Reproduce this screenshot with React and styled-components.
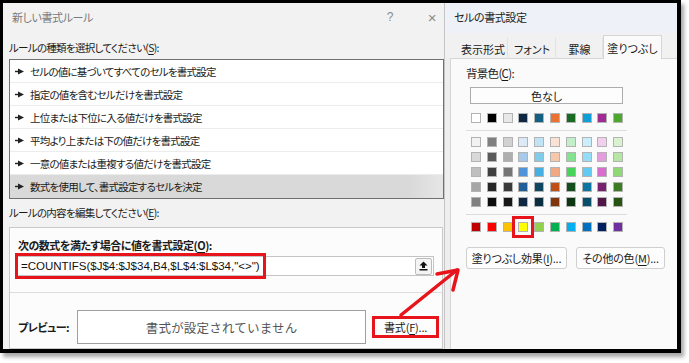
import styled, { createGlobalStyle } from "styled-components";

const GlobalStyle = createGlobalStyle`
  body {
    margin: 0;
    background: #ffffff;
    font-family: "Noto Sans CJK JP", "Noto Sans", sans-serif;
    font-feature-settings: "palt";
    color: #1a1a1a;
  }
`;

const Page = styled.div`
  position: relative;
  width: 689px;
  height: 363px;
`;

const Frame = styled.div`
  box-sizing: border-box;
  width: 681px;
  height: 353px;
  border: 3px solid #000;
  border-right-width: 4px;
  border-bottom-width: 4px;
  box-shadow: 3px 4px 4px rgba(0, 0, 0, 0.35);
  display: flex;
  overflow: hidden;
`;

/* ---------- left: 新しい書式ルール ---------- */

const RuleDialog = styled.section`
  width: 441px;
  flex: none;
  background: #f2f2f2;
  display: flex;
  flex-direction: column;
  padding-left: 6px;
  box-sizing: border-box;
`;

const TitleBar = styled.div`
  height: 30px;
  display: flex;
  align-items: center;
  padding-left: ${({ $indent }) => $indent || 3}px;
  padding-bottom: 2px;
  box-sizing: border-box;
  font-size: 11px;
  letter-spacing: -0.4px;
  color: ${({ $muted }) => ($muted ? "#7a7a7a" : "#222")};
  background: ${({ $bg }) => $bg || "transparent"};
`;

const TitleText = styled.span`
  flex: 1;
`;

const TitleIcon = styled.span`
  width: ${({ $w }) => $w}px;
  text-align: center;
  color: #8a8a8a;
  font-size: ${({ $size }) => $size || 12}px;
  font-family: "Liberation Sans", sans-serif;
`;

const Label = styled.div`
  font-size: ${({ $bold, $size }) => $size || ($bold ? 11 : 10.5)}px;
  letter-spacing: ${({ $bold }) => ($bold ? -0.5 : -0.7)}px;
  line-height: 18px;
  margin-top: ${({ $mt }) => $mt || 0}px;
  margin-left: ${({ $ml }) => $ml || 0}px;
  font-weight: ${({ $bold }) => ($bold ? 700 : 400)};
  white-space: nowrap;
  u {
    text-underline-offset: 2px;
  }
`;

const RuleList = styled.ul`
  list-style: none;
  margin: 2px 0 0;
  padding: 0;
  border: 1px solid #707070;
  background: #fff;
`;

const RuleItem = styled.li`
  height: 23px;
  display: flex;
  align-items: center;
  gap: 6px;
  padding-left: 5px;
  font-size: 10.5px;
  letter-spacing: -0.75px;
  box-sizing: border-box;
  border-bottom: 1px solid ${({ $selected }) => ($selected ? "transparent" : "#ececec")};
  background: ${({ $selected }) =>
    $selected ? "linear-gradient(90deg, #d9d9d9 0%, #d9d9d9 92%, #e6e6e6 100%)" : "#fff"};
`;

const EditBox = styled.div`
  margin-top: 5px;
  margin-right: 1px;
  border: 1px solid #c9c9c9;
  background: #fcfcfc;
  padding-top: 8px;
  flex: 1;
`;

const FormulaField = styled.div`
  margin: 2px 8px 0 5px;
  height: 20px;
  border: 1px solid #c4c4c4;
  background: #fff;
  display: flex;
  align-items: center;
  box-sizing: border-box;
  padding-left: 2px;
`;

const FormulaText = styled.span`
  flex: none;
  display: inline-flex;
  align-items: center;
  height: 20px;
  padding: 0 3px;
  outline: 3px solid #e8141c;
  font-family: "Liberation Sans", Arial, sans-serif;
  font-size: 11.5px;
  color: #111;
  font-feature-settings: normal;
`;

const CollapseButton = styled.span`
  margin-left: auto;
  margin-right: 1px;
  width: 15px;
  height: 15px;
  border: 1px solid #bdbdbd;
  border-radius: 2px;
  background: #f4f4f4;
  display: flex;
  align-items: center;
  justify-content: center;
`;

const Divider = styled.div`
  height: 1px;
  background: #dcdcdc;
  margin-top: ${({ $mt }) => $mt || 0}px;
  width: ${({ $w }) => ($w ? `${$w}px` : "auto")};
`;

const PreviewRow = styled.div`
  margin-top: 17px;
  display: flex;
  align-items: center;
  padding-left: 8px;
`;

const PreviewBox = styled.div`
  margin-left: 8px;
  width: 289px;
  height: 34px;
  box-sizing: border-box;
  border: 1px solid #9f9f9f;
  background: #fff;
  display: flex;
  align-items: center;
  justify-content: center;
  font-size: 12.5px;
  color: #555;
  font-feature-settings: normal;
  letter-spacing: 0.2px;
`;

const DialogButton = styled.button`
  box-sizing: border-box;
  width: ${({ $w }) => $w}px;
  height: 22px;
  margin-left: ${({ $ml }) => $ml || 0}px;
  padding: 0;
  font-family: inherit;
  font-feature-settings: "palt";
  font-size: 11px;
  letter-spacing: -0.2px;
  color: #1a1a1a;
  background: #fdfdfd;
  border: ${({ $hot }) => ($hot ? "3px solid #e8141c" : "1px solid #cfcfcf")};
  border-radius: ${({ $hot }) => ($hot ? 0 : 3)}px;
  u {
    text-underline-offset: 2px;
  }
`;

/* ---------- right: セルの書式設定 ---------- */

const FormatDialog = styled.section`
  flex: 1;
  display: flex;
  flex-direction: column;
  background: #eeeeee;
  border-left: 1px solid #c4c4c4;
`;

const TabStrip = styled.div`
  height: 25px;
  display: flex;
  align-items: flex-end;
  padding-left: 13px;
  background: #f1f1f1;
`;

const Tab = styled.div`
  height: ${({ $active }) => ($active ? 24 : 22)}px;
  width: ${({ $w }) => $w}px;
  display: flex;
  align-items: center;
  justify-content: center;
  font-size: 11px;
  box-sizing: border-box;
  background: ${({ $active }) => ($active ? "#fafafa" : "transparent")};
  border: 1px solid ${({ $active }) => ($active ? "#d6d6d6" : "transparent")};
  border-bottom: none;
  border-right: 1px solid ${({ $active }) => ($active ? "#d6d6d6" : "#e2e2e2")};
  margin-bottom: -1px;
  position: relative;
  z-index: 1;
`;

const TabPanel = styled.div`
  flex: 1;
  margin-left: 5px;
  background: #fafafa;
  border-top: 1px solid #d6d6d6;
  border-left: 1px solid #d6d6d6;
  padding: 5px 0 0 15px;
`;

const NoColorButton = styled.div`
  margin: 5px 0 0 4px;
  width: 153px;
  height: 17px;
  box-sizing: border-box;
  border: 1px solid #adadad;
  background: #fdfdfd;
  font-size: 11px;
  display: flex;
  align-items: center;
  justify-content: center;
`;

const SwatchRow = styled.div`
  display: flex;
  gap: 5.8px;
  margin-left: 5px;
  margin-top: ${({ $mt }) => $mt || 0}px;
`;

const SwatchGrid = styled.div`
  display: flex;
  flex-direction: column;
  gap: 5px;
  margin-top: 6px;
`;

const Swatch = styled.span`
  width: 10px;
  height: 10px;
  box-sizing: border-box;
  border: 1px solid #b3b3b3;
  background: ${({ $c }) => $c};
  outline: ${({ $hot }) => ($hot ? "3px solid #e8141c" : "none")};
  outline-offset: 3px;
`;

const ButtonRow = styled.div`
  display: flex;
  gap: 9px;
  margin-top: 15px;
`;

const Annotation = styled.svg`
  position: absolute;
  left: 0;
  top: 0;
  pointer-events: none;
`;

const rules = [
  "セルの値に基づいてすべてのセルを書式設定",
  "指定の値を含むセルだけを書式設定",
  "上位または下位に入る値だけを書式設定",
  "平均より上または下の値だけを書式設定",
  "一意の値または重複する値だけを書式設定",
  "数式を使用して、書式設定するセルを決定",
];

const themeRow = ["#ffffff", "#000000", "#e8e8e8", "#0e2841", "#156082", "#e97132", "#196b24", "#0f9ed5", "#a02b93", "#4ea72e"];

const tintRows = [
  ["#f2f2f2", "#7f7f7f", "#d1d1d1", "#dceaf7", "#c0e4f5", "#fbe2d5", "#c1f0c8", "#caeefb", "#f2ceef", "#daf2d0"],
  ["#d9d9d9", "#595959", "#aeaeae", "#a6c9ec", "#83cbeb", "#f7c7ac", "#84e291", "#95dcf7", "#e59edd", "#b5e6a2"],
  ["#bfbfbf", "#404040", "#757575", "#4e95d9", "#45b0e1", "#f1a983", "#47d45a", "#61cbf3", "#d86dcd", "#8ed973"],
  ["#a6a6a6", "#262626", "#3a3a3a", "#215f9a", "#0f4761", "#c04f15", "#124f1a", "#0b76a0", "#782170", "#3b7d23"],
  ["#808080", "#0d0d0d", "#171717", "#0e2841", "#0a2f40", "#7f350e", "#0c3511", "#074f6a", "#501549", "#275317"],
];

const standardRow = ["#c00000", "#ff0000", "#ffc000", "#ffff00", "#92d050", "#00b050", "#00b0f0", "#0070c0", "#002060", "#7030a0"];

const Bullet = () => (
  <svg width="9" height="7" viewBox="0 0 9 7">
    <rect x="0" y="2.8" width="4" height="1.4" fill="#222" />
    <polygon points="3,0.5 9,3.5 3,6.5" fill="#222" />
  </svg>
);

const CollapseIcon = () => (
  <svg width="9" height="10" viewBox="0 0 9 10">
    <polygon points="4.5,0.5 8.5,4.5 6,4.5 6,7 3,7 3,4.5 0.5,4.5" fill="#111" />
    <rect x="0.5" y="8" width="8" height="1.5" fill="#111" />
  </svg>
);

export default function App() {
  return (
    <Page>
      <GlobalStyle />
      <Frame>
        <RuleDialog>
          <TitleBar $muted>
            <TitleText>新しい書式ルール</TitleText>
            <TitleIcon $w={20}>?</TitleIcon>
            <TitleIcon $w={20} $size={15} style={{ marginLeft: 22, marginRight: 2 }}>×</TitleIcon>
          </TitleBar>
          <Label $mt={6}>ルールの種類を選択してください(<u>S</u>):</Label>
          <RuleList>
            {rules.map((r, i) => (
              <RuleItem key={r} $selected={i === rules.length - 1}>
                <Bullet />
                {r}
              </RuleItem>
            ))}
          </RuleList>
          <Label $mt={5}>ルールの内容を編集してください(<u>E</u>):</Label>
          <EditBox>
            <Label $bold $ml={8}>次の数式を満たす場合に値を書式設定(<u>O</u>):</Label>
            <FormulaField>
              <FormulaText>=COUNTIFS($J$4:$J$34,B4,$L$4:$L$34,"&lt;&gt;")</FormulaText>
              <CollapseButton>
                <CollapseIcon />
              </CollapseButton>
            </FormulaField>
            <Divider $mt={16} />
            <PreviewRow>
              <Label $bold>プレビュー:</Label>
              <PreviewBox>書式が設定されていません</PreviewBox>
              <DialogButton $hot $w={67} $ml={6}>
                書式(<u>F</u>)...
              </DialogButton>
            </PreviewRow>
          </EditBox>
        </RuleDialog>

        <FormatDialog>
          <TitleBar $indent={9} $bg="#eef2f8">
            <TitleText>セルの書式設定</TitleText>
          </TitleBar>
          <TabStrip>
            <Tab $w={50}>表示形式</Tab>
            <Tab $w={48}>フォント</Tab>
            <Tab $w={47}>罫線</Tab>
            <Tab $w={59} $active>塗りつぶし</Tab>
          </TabStrip>
          <TabPanel>
            <Label $size={11.5}>背景色(<u>C</u>):</Label>
            <NoColorButton>色なし</NoColorButton>
            <SwatchRow $mt={9}>
              {themeRow.map((c) => (
                <Swatch key={c} $c={c} />
              ))}
            </SwatchRow>
            <Divider $mt={7} $w={161} />
            <SwatchGrid>
              {tintRows.map((row, r) => (
                <SwatchRow key={r}>
                  {row.map((c, i) => (
                    <Swatch key={i} $c={c} />
                  ))}
                </SwatchRow>
              ))}
            </SwatchGrid>
            <Divider $mt={7} $w={161} />
            <SwatchRow $mt={7}>
              {standardRow.map((c) => (
                <Swatch key={c} $c={c} $hot={c === "#ffff00"} />
              ))}
            </SwatchRow>
            <ButtonRow>
              <DialogButton $w={101}>塗りつぶし効果(<u>I</u>)...</DialogButton>
              <DialogButton $w={89}>その他の色(<u>M</u>)...</DialogButton>
            </ButtonRow>
          </TabPanel>
        </FormatDialog>
      </Frame>

      <Annotation width="689" height="363" viewBox="0 0 689 363">
        <g stroke="#e8141c" strokeWidth="3.5" strokeLinecap="round" strokeLinejoin="round" fill="none">
          <line x1="401" y1="315" x2="457" y2="270" />
          <polyline points="437,274 458,270 453,290" />
        </g>
      </Annotation>
    </Page>
  );
}
